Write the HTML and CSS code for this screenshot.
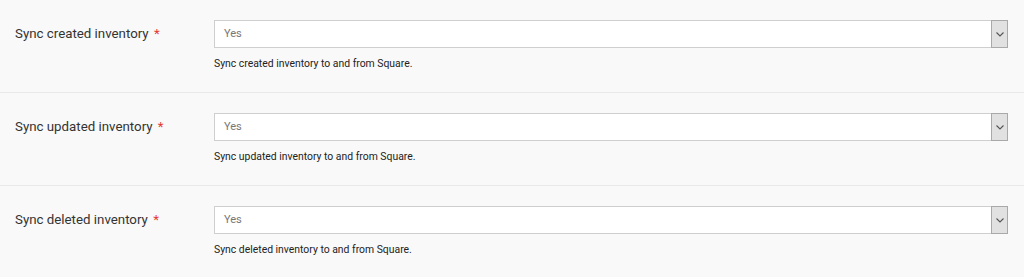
FILE: index.html
```html
<!DOCTYPE html>
<html lang="en">
<head>
    <meta charset="UTF-8">
    <title>Square Sync Settings</title>
    <link rel="stylesheet" href="styles.css">
</head>
<body>

<div id="settings">
    <div class="field-row">
        <label class="field-label">Sync created inventory <span class="req">*</span></label>
        <div class="field-control">
            <div class="select-box">
                <span class="select-value">Yes</span>
                <span class="select-arrow">
                    <svg width="8" height="5" viewBox="0 0 8 5"><path d="M0.5 0.5 L4 4 L7.5 0.5" fill="none" stroke="#555" stroke-width="1.1"/></svg>
                </span>
            </div>
            <p class="field-help">Sync created inventory to and from Square.</p>
        </div>
    </div>
    <div class="field-row">
        <label class="field-label">Sync updated inventory <span class="req">*</span></label>
        <div class="field-control">
            <div class="select-box">
                <span class="select-value">Yes</span>
                <span class="select-arrow">
                    <svg width="8" height="5" viewBox="0 0 8 5"><path d="M0.5 0.5 L4 4 L7.5 0.5" fill="none" stroke="#555" stroke-width="1.1"/></svg>
                </span>
            </div>
            <p class="field-help">Sync updated inventory to and from Square.</p>
        </div>
    </div>
    <div class="field-row">
        <label class="field-label">Sync deleted inventory <span class="req">*</span></label>
        <div class="field-control">
            <div class="select-box">
                <span class="select-value">Yes</span>
                <span class="select-arrow">
                    <svg width="8" height="5" viewBox="0 0 8 5"><path d="M0.5 0.5 L4 4 L7.5 0.5" fill="none" stroke="#555" stroke-width="1.1"/></svg>
                </span>
            </div>
            <p class="field-help">Sync deleted inventory to and from Square.</p>
        </div>
    </div>
</div>

</body>
</html>
```

FILE: styles.css
```css
body {
    margin: 0;
    font-family: Roboto, "Liberation Sans", Arial, sans-serif;
    background: #f9f9f9;
}

.field-row {
    display: grid;
    grid-template-columns: 199px 1fr;
    height: 93px;
    box-sizing: border-box;
    padding: 20px 16px 0 15px;
    border-bottom: 1px solid #e9e9e9;
}
.field-row:last-child { border-bottom: none; }

.field-label {
    font-size: 13.3px;
    color: #333;
    line-height: 28px;
}
.req { color: #e53935; margin-left: 2px; }

.select-box {
    display: flex;
    align-items: stretch;
    height: 28px;
    box-sizing: border-box;
    background: #fff;
    border: 1px solid #cfcfcf;
}
.select-value {
    flex: 1;
    padding-left: 9px;
    font-size: 11px;
    line-height: 26px;
    color: #777;
}
.select-arrow {
    width: 15px;
    display: flex;
    align-items: center;
    justify-content: center;
    background: #e1e1e1;
    border: 1px solid #a9a9a9;
    margin: -1px -1px -1px 0;
}

.field-help {
    margin: 9px 0 0 0;
    font-size: 10.4px;
    color: #222;
}
```
